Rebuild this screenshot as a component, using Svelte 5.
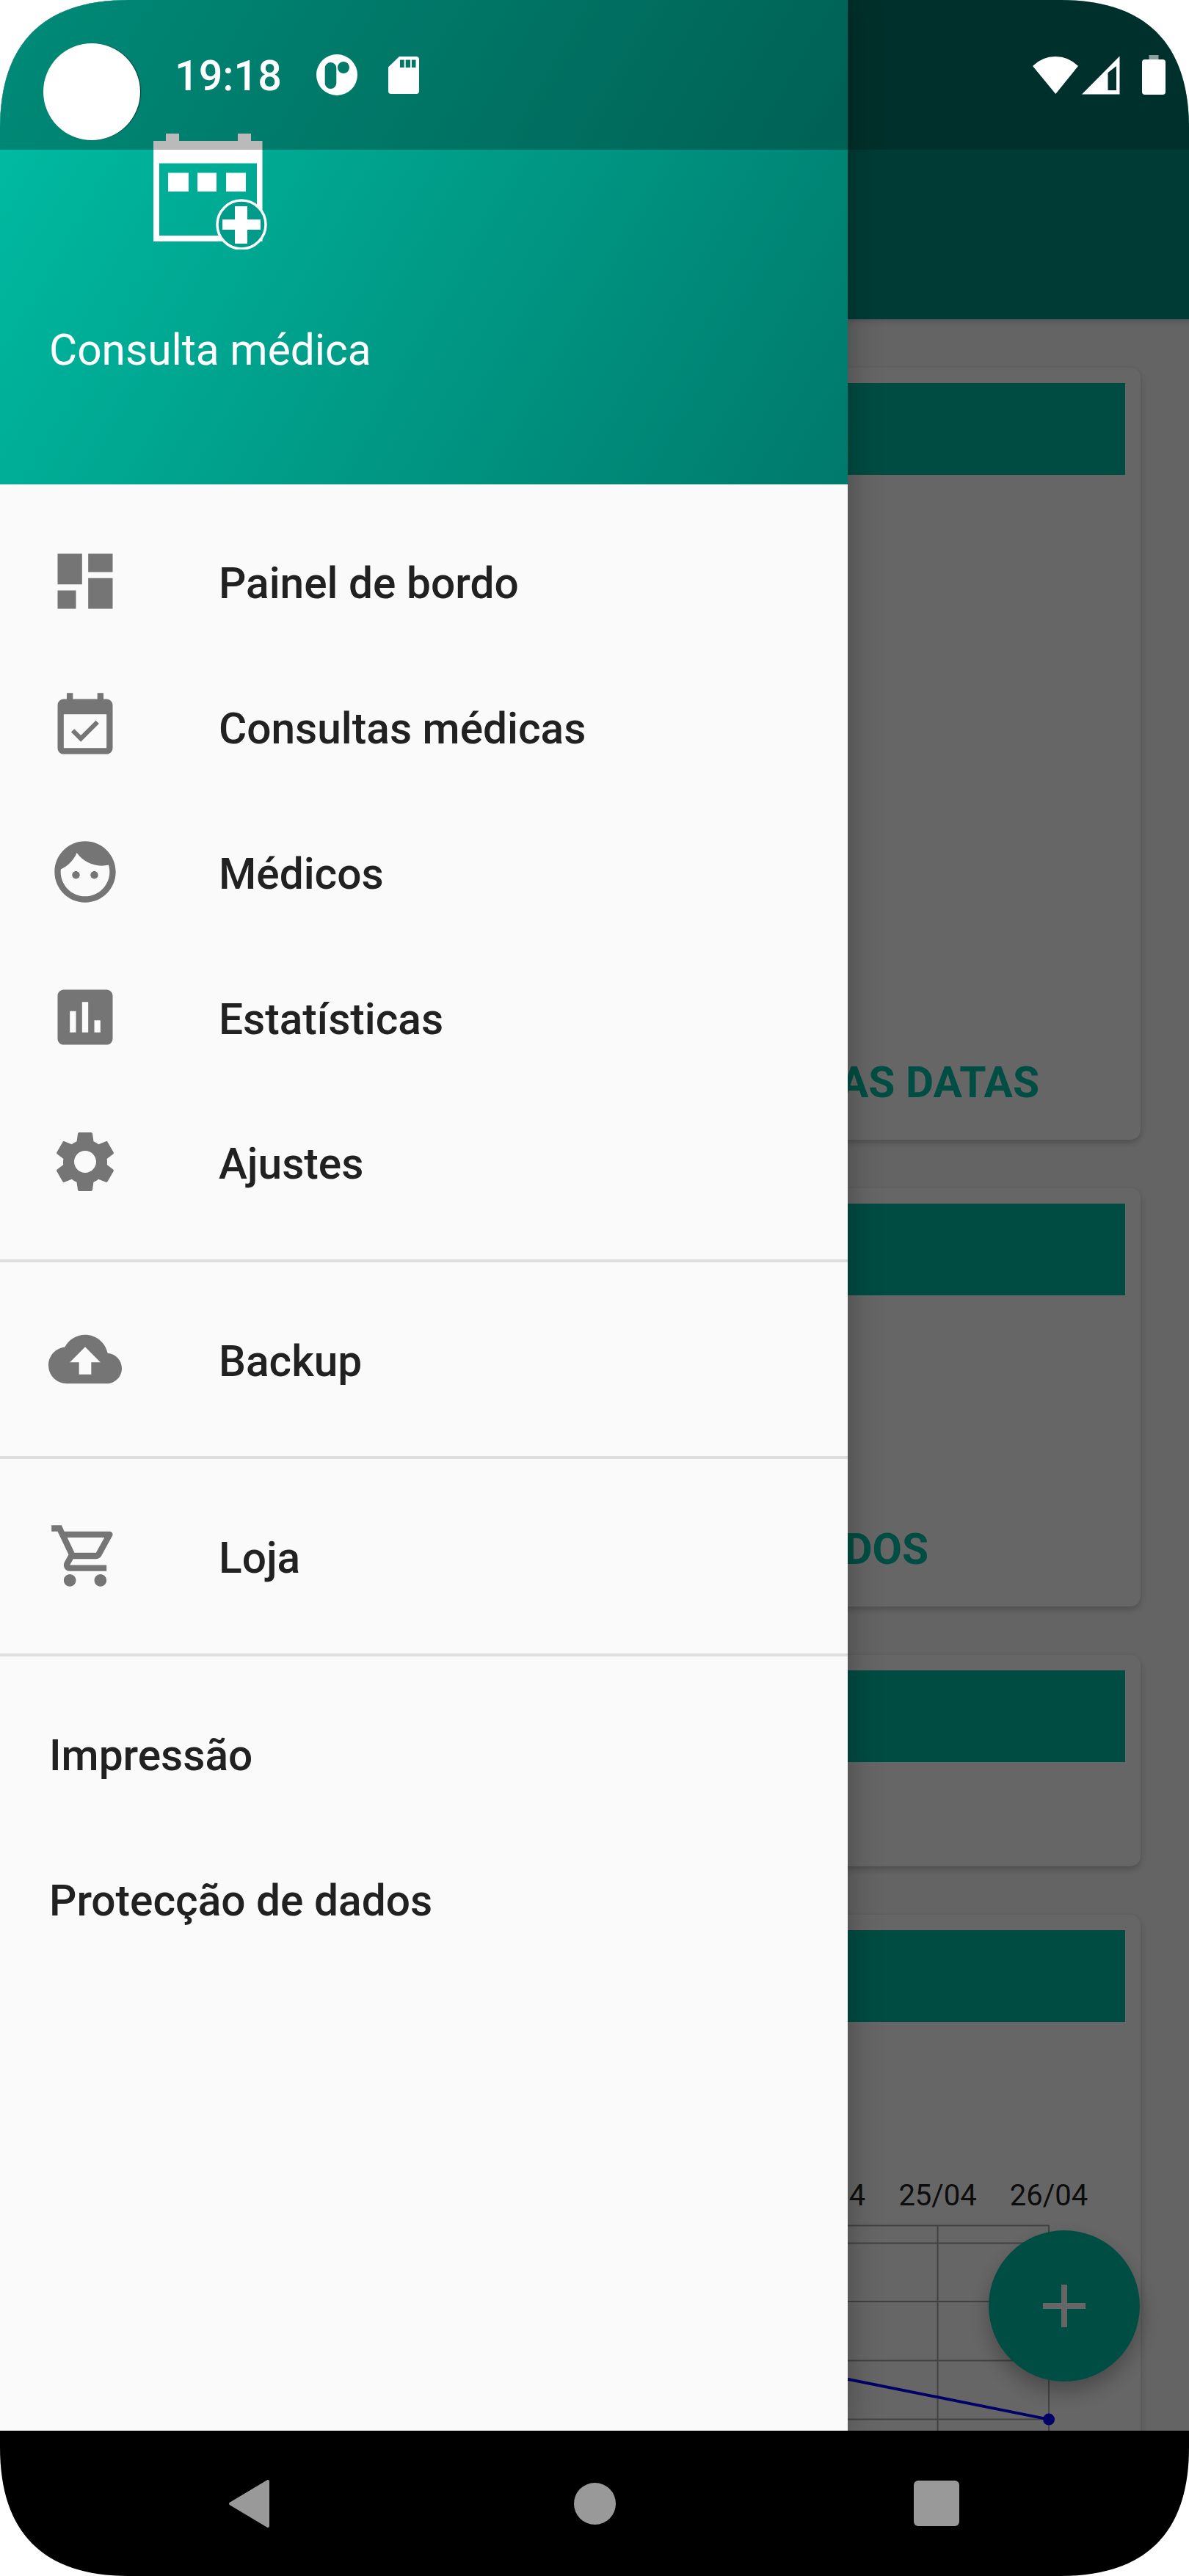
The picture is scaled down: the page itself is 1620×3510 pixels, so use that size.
<script>
  const dashboard = 'M3 13h8V3H3v10zm0 8h6v-6H3v6zm10 0h8V11h-8v10zm0-18v6h8V3h-8z';
  const eventCheck = 'M16.53 11.06L15.47 10l-4.88 4.88-2.12-2.12-1.06 1.06L10.59 17l5.94-5.94zM19 3h-1V1h-2v2H8V1H6v2H5c-1.11 0-1.99.9-1.99 2L3 19c0 1.1.89 2 2 2h14c1.1 0 2-.9 2-2V5c0-1.1-.9-2-2-2zm0 16H5V8h14v11z';
  const face = 'M9 11.75c-.69 0-1.25.56-1.25 1.25s.56 1.25 1.25 1.25 1.25-.56 1.25-1.25-.56-1.25-1.25-1.25zm6 0c-.69 0-1.25.56-1.25 1.25s.56 1.25 1.25 1.25 1.25-.56 1.25-1.25-.56-1.25-1.25-1.25zM12 2C6.48 2 2 6.48 2 12s4.48 10 10 10 10-4.48 10-10S17.52 2 12 2zm0 18c-4.41 0-8-3.59-8-8 0-.29.02-.58.05-.86 2.36-1.05 4.23-2.98 5.21-5.37C11.07 8.33 14.05 10 17.42 10c.78 0 1.53-.09 2.25-.26.21.71.33 1.47.33 2.26 0 4.41-3.59 8-8 8z';
  const assessment = 'M19 3H5c-1.1 0-2 .9-2 2v14c0 1.1.9 2 2 2h14c1.1 0 2-.9 2-2V5c0-1.1-.9-2-2-2zM9 17H7v-7h2v7zm4 0h-2V7h2v10zm4 0h-2v-4h2v4z';
  const gear = 'M19.14 12.94c.04-.3.06-.61.06-.94 0-.32-.02-.64-.07-.94l2.03-1.58c.18-.14.23-.41.12-.61l-1.92-3.32c-.12-.22-.37-.29-.59-.22l-2.39.96c-.5-.38-1.03-.7-1.62-.94l-.36-2.54c-.04-.24-.24-.41-.48-.41h-3.84c-.24 0-.43.17-.47.41l-.36 2.54c-.59.24-1.13.57-1.62.94l-2.39-.96c-.22-.08-.47 0-.59.22L2.74 8.87c-.12.21-.08.47.12.61l2.03 1.58c-.05.3-.09.63-.09.94s.02.64.07.94l-2.03 1.58c-.18.14-.23.41-.12.61l1.92 3.32c.12.22.37.29.59.22l2.39-.96c.5.38 1.03.7 1.62.94l.36 2.54c.05.24.24.41.48.41h3.84c.24 0 .44-.17.47-.41l.36-2.54c.59-.24 1.13-.56 1.62-.94l2.39.96c.22.08.47 0 .59-.22l1.92-3.32c.12-.22.07-.47-.12-.61l-2.01-1.58zM12 15.6c-1.98 0-3.6-1.62-3.6-3.6s1.62-3.6 3.6-3.6 3.6 1.62 3.6 3.6-1.62 3.6-3.6 3.6z';
  const cloud = 'M19.35 10.04C18.67 6.59 15.64 4 12 4 9.11 4 6.6 5.64 5.35 8.04 2.34 8.36 0 10.91 0 14c0 3.31 2.69 6 6 6h13c2.76 0 5-2.24 5-5 0-2.64-2.05-4.78-4.65-4.96zM14 13v4h-4v-4H7l5-5 5 5h-3z';
  const cart = 'M15.55 13c.75 0 1.41-.41 1.75-1.03l3.58-6.49c.37-.66-.11-1.48-.87-1.48H5.21l-.94-2H1v2h2l3.6 7.59-1.35 2.44C4.52 15.37 5.48 17 7 17h12v-2H7l1.1-2h7.45zM6.16 6h12.15l-2.76 5H8.53L6.16 6zM7 18c-1.1 0-1.99.9-1.99 2S5.9 22 7 22s2-.9 2-2-.9-2-2-2zm10 0c-1.1 0-1.99.9-1.99 2s.89 2 1.99 2 2-.9 2-2-.9-2-2-2z';

  const sections = [
    [
      { label: 'Painel de bordo', icon: dashboard },
      { label: 'Consultas médicas', icon: eventCheck },
      { label: 'Médicos', icon: face },
      { label: 'Estatísticas', icon: assessment },
      { label: 'Ajustes', icon: gear }
    ],
    [{ label: 'Backup', icon: cloud }],
    [{ label: 'Loja', icon: cart }],
    [{ label: 'Impressão' }, { label: 'Protecção de dados' }]
  ];

  const gridY = [82.6, 106.4, 186, 266.5, 346.6];
  const dates = [
    { x: 1060, text: '24/04' },
    { x: 1211.6, text: '25/04' },
    { x: 1363, text: '26/04' }
  ];
</script>

<div class="screen">
  <div class="page">
    <div class="status-bg"></div>
    <div class="appbar"></div>
    <div class="content">
      <section class="card tall">
        <div class="card-head"></div>
        <div class="action first">AS DATAS</div>
      </section>
      <section class="card mid">
        <div class="card-head"></div>
        <div class="action second">DOS</div>
      </section>
      <section class="card small">
        <div class="card-head"></div>
      </section>
      <section class="card last">
        <div class="card-head"></div>
        <svg class="chart" width="1488" height="362" viewBox="0 0 1488 362">
          {#each gridY as y}
            <line x1="900" x2="1363" y1={y} y2={y} stroke="#a4a4a4" stroke-width="2" />
          {/each}
          <line x1="1211.6" x2="1211.6" y1="82" y2="362" stroke="#a4a4a4" stroke-width="2" />
          <line x1="1363" x2="1363" y1="82" y2="362" stroke="#a4a4a4" stroke-width="2" />
          {#each dates as d}
            <text x={d.x} y="55" text-anchor="middle" class="date">{d.text}</text>
          {/each}
          <line x1="1000" y1="274" x2="1363" y2="346.6" stroke="#0000ff" stroke-width="4" />
          <circle cx="1363" cy="346.6" r="8" fill="#0000ff" />
        </svg>
      </section>
    </div>
    <nav class="navbar">
      <svg class="nav-back" width="57" height="67" viewBox="0 0 57 67">
        <polygon points="54,3 54,64 3,33.5" fill="#999" stroke="#999" stroke-width="4" stroke-linejoin="round" />
      </svg>
      <div class="nav-home"></div>
      <div class="nav-recent"></div>
    </nav>
  </div>

  <div class="fab">
    <svg width="58" height="58" viewBox="0 0 58 58">
      <path d="M25 0h8v25h25v8H33v25h-8V33H0v-8h25z" fill="#fff" />
    </svg>
  </div>

  <div class="scrim"></div>

  <aside class="drawer">
    <header class="drawer-head">
      <svg class="logo" width="160" height="160" viewBox="0 0 160 160">
        <path fill="#fff" fill-rule="evenodd" d="M21 2h18v10h62V12h18V2h18v10h15.500v137H4V12h17zM12 42.500V141h133V42.500z" />
        <rect x="24" y="55.500" width="28" height="25.500" fill="#fff" />
        <rect x="64" y="55.500" width="26" height="25.500" fill="#fff" />
        <rect x="103" y="55.500" width="27" height="25.500" fill="#fff" />
        <circle cx="124" cy="126" r="33" fill="#009c89" stroke="#fff" stroke-width="3.500" />
        <path fill="#fff" d="M115 101h17v18h18v14h-18v19h-17v-19H98v-14h17z" />
      </svg>
      <div class="drawer-title">Consulta médica</div>
      <div class="status-shade"></div>
    </header>

    {#each sections as items, i}
      {#if i > 0}
        <div class="divider"></div>
      {/if}
      <ul class="menu">
        {#each items as item}
          <li class="item" class:plain={!item.icon}>
            {#if item.icon}
              <svg class="item-icon" width="100" height="100" viewBox="0 0 24 24">
                <path d={item.icon} fill="#757575" />
              </svg>
            {/if}
            <span class="item-label">{item.label}</span>
          </li>
        {/each}
      </ul>
    {/each}
  </aside>

  <div class="statusbar">
    <div class="avatar"></div>
    <span class="time">19:18</span>
    <svg class="st-round" width="56" height="56" viewBox="0 0 56 56">
      <path fill="#fff" fill-rule="evenodd" d="M28 0a28 28 0 1 0 0 56a28 28 0 1 0 0-56zM19.500 11a7.800 7.800 0 0 1 7.800 7.800v20.400a7.800 7.800 0 0 1-15.600 0V18.800a7.800 7.800 0 0 1 7.800-7.800zM37 10a8 8 0 1 1 0 16a8 8 0 1 1 0-16z" />
    </svg>
    <svg class="st-sd" width="42" height="51" viewBox="0 0 42 51">
      <path fill="#fff" fill-rule="evenodd" d="M15 0H38a4 4 0 0 1 4 4V47a4 4 0 0 1-4 4H4a4 4 0 0 1-4-4V14.500zM16 4.500V15h5.700V4.500zM23.700 4.500V15h6.300V4.500zM32 4.500V15h5.500V4.500z" />
    </svg>
    <svg class="st-wifi" width="62" height="53" viewBox="0 0 62 53">
      <path fill="#fff" d="M31.300 52L0 14Q13 1 31 1T62 14z" />
    </svg>
    <svg class="st-cell" width="52" height="53" viewBox="0 0 52 53">
      <path fill="#fff" fill-rule="evenodd" d="M0 52.500L51.500 .500V52.500zM35.500 23V47H47V14z" />
    </svg>
    <svg class="st-battery" width="32" height="54" viewBox="0 0 32 54">
      <rect x="9.500" y="0" width="13" height="7" fill="#fff" opacity=".55" />
      <rect x="0" y="6" width="32" height="48" rx="4" fill="#fff" />
    </svg>
  </div>
</div>

<style>
  :global(body) {
    margin: 0;
    background: #fff;
  }

  .screen {
    position: relative;
    width: 1620px;
    height: 3510px;
    overflow: hidden;
    /* device corners are a bit squarer than a plain circle arc */
    clip-path: path('M0 175C0 59 59 0 175 0H1445C1561 0 1620 59 1620 175V3335C1620 3451 1561 3510 1445 3510H175C59 3510 0 3451 0 3335Z');
    font-family: Roboto, 'Liberation Sans', sans-serif;
  }

  .page {
    display: flex;
    flex-direction: column;
    height: 100%;
    background: #fafafa;
  }

  .status-bg {
    height: 204px;
    flex: none;
    background: #00796b;
  }

  .appbar {
    height: 231px;
    flex: none;
    background: #009688;
  }

  .content {
    flex: 1;
    min-height: 0;
    overflow: hidden;
    display: flex;
    flex-direction: column;
    gap: 66px;
    padding: 66px 66px 0;
    box-shadow: inset 0 12px 12px -12px rgba(0, 0, 0, 0.25);
  }

  .card {
    flex: none;
    box-sizing: border-box;
    display: flex;
    flex-direction: column;
    background: #fff;
    border-radius: 14px;
    padding: 21px 21px 0;
    box-shadow: 0 4px 10px rgba(0, 0, 0, 0.22);
  }

  .tall { height: 1052px; }
  .mid { height: 570px; }
  .small { height: 288px; }
  .last { height: 800px; }

  .card-head {
    height: 125px;
    flex: none;
    background: #00bfa5;
  }

  .action {
    margin-top: auto;
    margin-bottom: 44px;
    line-height: 68px;
    font-size: 58.600px;
    font-weight: 700;
    text-align: right;
    color: #00c4a8;
  }

  .first { padding-right: 117px; }
  .second { padding-right: 268px; }

  .chart {
    display: block;
    margin: 195px -21px 0;
  }

  .date {
    font-size: 40px;
    fill: #222;
  }

  .navbar {
    height: 198px;
    flex: none;
    display: flex;
    align-items: center;
    background: #000;
    position: relative;
    z-index: 3;
  }

  .nav-back { margin-left: 311px; }
  .nav-home {
    width: 57px;
    height: 57px;
    margin-left: 414px;
    border-radius: 50%;
    background: #999;
  }
  .nav-recent {
    width: 62px;
    height: 62px;
    margin-left: 406px;
    border-radius: 6px;
    background: #999;
  }

  .fab {
    position: absolute;
    left: 1347px;
    top: 3039px;
    width: 206px;
    height: 206px;
    border-radius: 50%;
    background: #00c4a8;
    display: flex;
    align-items: center;
    justify-content: center;
    box-shadow: 0 14px 28px rgba(0, 0, 0, 0.28);
  }

  .scrim {
    position: absolute;
    left: 0;
    right: 0;
    top: 0;
    bottom: 198px;
    background: rgba(0, 0, 0, 0.6);
  }

  .drawer {
    position: absolute;
    left: 0;
    top: 0;
    bottom: 198px;
    width: 1155px;
    background: #fafafa;
    box-shadow: 0 0 44px rgba(0, 0, 0, 0.3);
  }

  .drawer-head {
    position: relative;
    height: 660px;
    box-sizing: border-box;
    padding: 180px 0 0 67px;
    background: linear-gradient(120deg, #00bfa5, #00796b);
  }

  .logo {
    display: block;
    margin-left: 138px;
  }

  .drawer-title {
    margin-top: 103px;
    font-size: 58.600px;
    line-height: 68px;
    color: #fff;
  }

  .status-shade {
    position: absolute;
    left: 0;
    right: 0;
    top: 0;
    height: 204px;
    background: rgba(0, 0, 0, 0.27);
  }

  .menu {
    list-style: none;
    margin: 0;
    padding: 33.400px 0;
  }

  .item {
    height: 197.750px;
    display: flex;
    align-items: center;
    font-size: 58.600px;
    font-weight: 500;
    color: #212121;
  }

  .plain { padding-left: 67px; }

  .item-icon {
    margin: 0 132px 0 66px;
    flex: none;
  }

  .item-label {
    padding-top: 6px;
  }

  .divider {
    height: 4px;
    background: #dedede;
  }

  .statusbar {
    position: absolute;
    left: 0;
    right: 0;
    top: 0;
    height: 204px;
    display: flex;
    align-items: center;
    color: #fff;
  }

  .avatar {
    width: 132px;
    height: 132px;
    margin: 46px 47px 0 59px;
    border-radius: 50%;
    background: #fff;
    box-shadow: 1px 0 1px rgba(0, 0, 0, 0.6);
    flex: none;
  }

  .time {
    font-size: 57.500px;
    font-weight: 500;
    line-height: 64px;
    padding-top: 4px;
  }

  .st-round { margin-left: 47px; }
  .st-sd { margin-left: 42px; }
  .st-wifi { margin-left: auto; }
  .st-cell { margin-left: 5px; }
  .st-battery { margin: 0 32px 0 30px; }
</style>
